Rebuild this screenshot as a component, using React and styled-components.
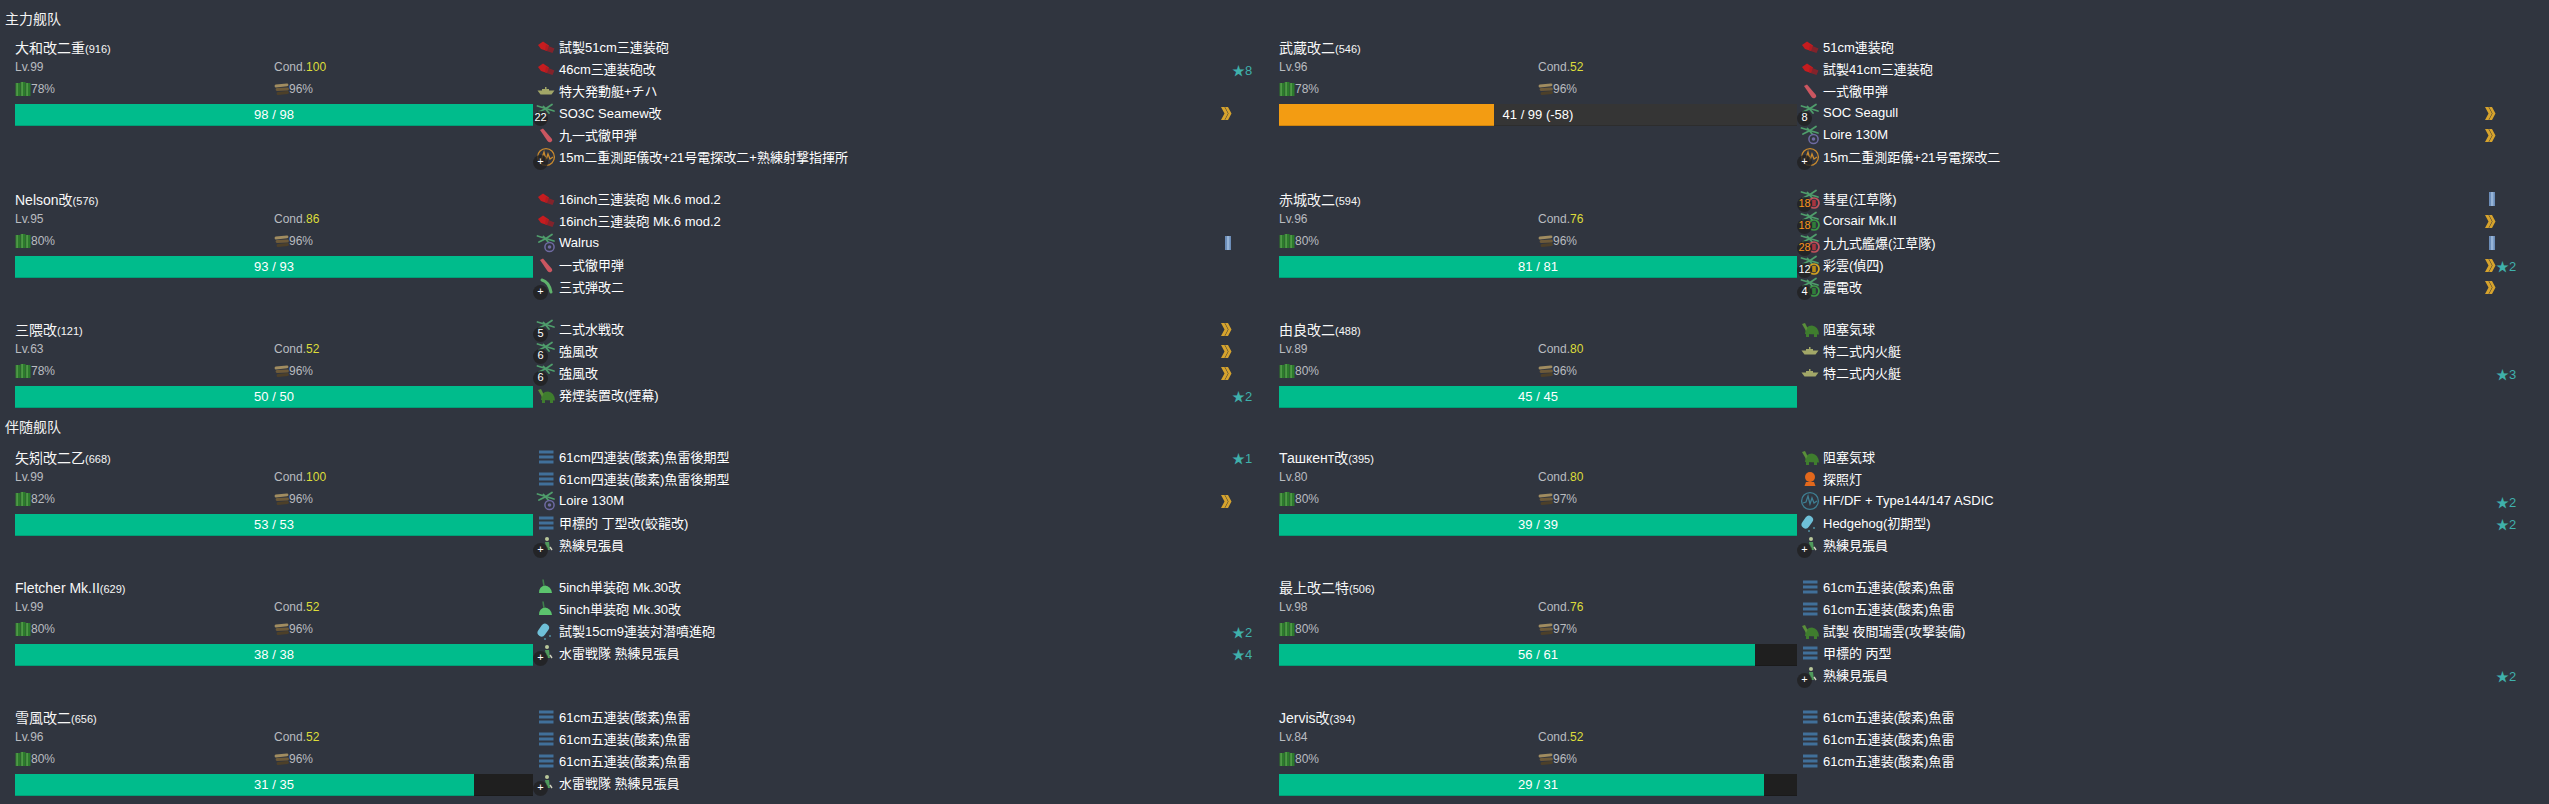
import React from 'react';
import styled, { createGlobalStyle } from 'styled-components';

const Global = createGlobalStyle`
  html, body { margin: 0; padding: 0; background: #30353f; }
  body { font-family: "Liberation Sans", "Noto Sans CJK JP", sans-serif; color: #fff; }
`;
const Page = styled.div`
  width: 2549px;
  height: 804px;
  overflow: hidden;
  background: #30353f;
  padding-top: 10px;
  box-sizing: border-box;
`;
const FleetTitle = styled.div`
  font-size: 14px;
  line-height: 18px;
  height: 18px;
  padding-left: 5px;
  margin-bottom: ${p => p.$after}px;
  color: #f4f4f4;
`;
const ShipGrid = styled.div`
  display: grid;
  grid-template-columns: 1264px 1264px;
  row-gap: 20px;
  margin-bottom: 10px;
`;
const ShipCell = styled.div`
  display: flex;
  padding: 0 13px 0 15px;
  min-width: 0;
`;
const ShipInfo = styled.div`
  width: 518px;
  flex: none;
`;
const ShipName = styled.div`
  height: 22px;
  padding-top: 3px;
  box-sizing: border-box;
  font-size: 14px;
  line-height: 18px;
  color: #f7f7f7;
`;
const ShipId = styled.span`
  font-size: 11px;
`;
const StatRow = styled.div`
  display: grid;
  grid-template-columns: 259px 259px;
  height: ${p => p.$h}px;
  align-items: center;
  font-size: 12px;
  color: #b9bcc0;
`;
const Stat = styled.div`
  display: flex;
  align-items: center;
`;
const CondValue = styled.span`
  color: #dddd3a;
`;
const HpTrack = styled.div`
  position: relative;
  height: 22px;
  margin-top: 2px;
  background: ${p => p.$track};
  box-shadow: inset 0 -1px 0 rgba(0, 0, 0, 0.15);
`;
const HpFill = styled.div`
  height: 100%;
  background: ${p => p.$color};
  box-shadow: inset 0 -1px 0 rgba(0, 0, 0, 0.15);
`;
const HpLabel = styled.div`
  position: absolute;
  inset: 0;
  text-align: center;
  font-size: 13px;
  line-height: 21px;
  color: #fff;
`;
const EquipList = styled.div`
  flex: 1;
  min-width: 0;
`;
const EquipRow = styled.div`
  display: flex;
  align-items: center;
  height: 22px;
  font-size: 13px;
  padding-left: 3px;
  color: #fff;
`;
const IconBox = styled.div`
  position: relative;
  width: 20px;
  height: 20px;
  flex: none;
  margin-right: 3px;
`;
const Count = styled.div`
  position: absolute;
  left: -3px;
  top: 8px;
  width: 15px;
  height: 15px;
  border-radius: 50%;
  background: rgba(32, 32, 34, 0.8);
  color: ${p => p.$color};
  font-size: 11px;
  line-height: 12px;
  text-align: center;
  white-space: nowrap;
  display: flex;
  justify-content: center;
`;
const EquipName = styled.div`
  flex: 1;
  white-space: nowrap;
  min-width: 0;
  padding-bottom: 1px;
`;
const ProfSlot = styled.div`
  width: 12px;
  flex: none;
  display: flex;
  justify-content: center;
  align-items: center;
`;
const StarSlot = styled.div`
  width: 19px;
  flex: none;
  text-align: right;
  font-size: 13px;
  color: #3fb0ab;
  white-space: nowrap;
`;

const green = '#4f9e6c';
const Plane = () => (
  <g fill="none" stroke={green} strokeWidth="1.8" strokeLinecap="round">
    <path d="M1.5 3 L18 8" />
    <path d="M3 9 L10 5.5 L16 1.5" />
    <path d="M7.5 3.5 L13 10" />
  </g>
);
const Roundel = ({ color, inner }) => (
  <g>
    <circle cx="14" cy="14" r="5" fill="#30353f" stroke={color} strokeWidth="1.7" />
    <rect x="12.2" y="10.8" width="3.6" height="6.4" fill={inner} />
  </g>
);
const RADAR = 'M3 12 L6 11 L8 5 L10 13 L12 7 L14 12 L17 10';
const icons = {
  gun: (
    <g>
      <path d="M2 8 L7 4.5 L13 8.5 L11 14 L5 12 Z" fill="#c61c1f" />
      <path d="M10 8 L18.5 11.5 L16.5 16 L9 13.5 Z" fill="#a51d24" opacity="0.7" />
    </g>
  ),
  ap: <path d="M4 5 L7 3.5 L16 14 Q17 16 15 17 Q13 18 11.5 16 Z" fill="#cb5660" />,
  boat: <path d="M1.5 9.5 H6 V8 H9 V6 H10.5 V8 H13 V9.5 H18.5 L15.5 13.5 H4.5 Z" fill="#a2a768" />,
  plane: <Plane />,
  seaRecon: (
    <g>
      <Plane />
      <circle cx="13.5" cy="14" r="4.6" fill="#30353f" stroke="#6f6ba3" strokeWidth="1.5" />
      <circle cx="13.5" cy="14" r="1.8" fill="#6f6ba3" />
    </g>
  ),
  radar: (
    <g fill="none" stroke="#c98a2e" strokeWidth="1.3">
      <circle cx="10" cy="10" r="8.4" />
      <path d={RADAR} />
    </g>
  ),
  radarBlue: (
    <g fill="none" stroke="#3f7f93" strokeWidth="1.3">
      <circle cx="10" cy="10" r="8.4" />
      <path d={RADAR} />
    </g>
  ),
  shell3: <path d="M6 3 Q13 5 15 15" fill="none" stroke="#5fb26c" strokeWidth="3" strokeLinecap="round" />,
  bomber: (
    <g>
      <Plane />
      <Roundel color="#c3525c" inner="#a8343e" />
    </g>
  ),
  fighter: (
    <g>
      <Plane />
      <Roundel color="#3d9a45" inner="#2f7d38" />
    </g>
  ),
  scout: (
    <g>
      <Plane />
      <Roundel color="#d8a520" inner="#b98a14" />
    </g>
  ),
  turtle: (
    <g fill="#3f7d2e">
      <path d="M5 15 Q5 6.5 12 6.5 Q18.5 7.5 19 15.5 Z" />
      <path d="M2 5 L5 4 L7.5 9 L6 12 Z" fill="#5a8f3a" />
      <rect x="6" y="15" width="3" height="3" />
      <rect x="14" y="15" width="3" height="3" />
    </g>
  ),
  torpedo: (
    <g fill="#41709a">
      <rect x="3" y="3.5" width="14.5" height="3" />
      <rect x="3" y="8.5" width="14.5" height="3" />
      <rect x="3" y="13.5" width="14.5" height="3" />
    </g>
  ),
  dome: (
    <g fill="#5cc46e">
      <path d="M3 16 Q3 9 9 8.5 Q15 9 16 16 Z" />
      <path d="M8 9 L7 2.5" stroke="#3f7f4c" strokeWidth="1.6" />
    </g>
  ),
  asw: (
    <g>
      <rect x="3.5" y="2.5" width="8" height="14" rx="4" fill="#6fc0d8" transform="rotate(35 8 9)" />
      <circle cx="14" cy="15" r="1" fill="#4f8ea0" />
      <circle cx="9" cy="18" r="1" fill="#4f8ea0" />
    </g>
  ),
  light: (
    <g fill="#e2681c">
      <circle cx="10" cy="8" r="5" />
      <path d="M6 13 H14 L15.5 17 H4.5 Z" />
    </g>
  ),
  lookout: (
    <g>
      <circle cx="11" cy="4" r="2" fill="#b9c79a" />
      <path d="M9 7 H13 L14 15 H11 L10 12 Z" fill="#4f9a5c" />
      <path d="M14 12 L16 15" stroke="#d4d4c0" strokeWidth="1.4" />
    </g>
  ),
};

const EquipIcon = ({ kind }) => (
  <svg width="20" height="20" viewBox="0 0 20 20">{icons[kind]}</svg>
);
const FuelIcon = () => (
  <svg width="16" height="14" viewBox="0 0 16 14">
    <g fill="#2c7a2c">
      <rect x="0.5" y="1" width="5" height="13" />
      <rect x="5.5" y="0" width="5" height="14" />
      <rect x="10.5" y="1" width="5" height="13" />
    </g>
    <g fill="#5fa653">
      <rect x="1.5" y="1" width="1.2" height="13" />
      <rect x="6.5" y="0" width="1.2" height="14" />
      <rect x="11.5" y="1" width="1.2" height="13" />
    </g>
  </svg>
);
const AmmoIcon = () => (
  <svg width="15" height="13" viewBox="0 0 15 13">
    <g fill="none" strokeWidth="2.8" strokeLinecap="round">
      <path d="M2 3 L13 1.8" stroke="#a08c60" />
      <path d="M3 6.5 L13.5 6" stroke="#6d5a39" />
      <path d="M4 10.5 L13.5 9.5" stroke="#4d4029" />
    </g>
  </svg>
);
const Chevrons = () => (
  <svg width="12" height="15" viewBox="0 0 12 15">
    <path d="M1 1 H4.5 L8 7.5 L4.5 14 H1 L4.5 7.5 Z" fill="#d6a32d" />
    <path d="M5 1 H8 L11.5 7.5 L8 14 H5 L8.5 7.5 Z" fill="#d6a32d" />
  </svg>
);
const Bar = () => (
  <svg width="6" height="14" viewBox="0 0 6 14" style={{ marginLeft: 4 }}>
    <rect width="6" height="14" fill="#6c8db8" />
    <rect x="2" width="2.4" height="14" fill="#97b4d6" />
  </svg>
);

const ORANGE = '#f7941d';
const e = (name, kind, o = {}) => ({ name, kind, ...o });
const plus = { n: '+' };
const T61 = '61cm五連装(酸素)魚雷';
const T61Q = '61cm四連装(酸素)魚雷後期型';
const LOOK = '熟練見張員';
const TLOOK = '水雷戦隊 熟練見張員';

const fleets = [
  {
    title: '主力舰队',
    after: 8,
    ships: [
      { name: '大和改二重', id: 916, lv: 99, cond: 100, fuel: 78, ammo: 96, hp: 98, max: 98, equip: [
        e('試製51cm三連装砲', 'gun'), e('46cm三連装砲改', 'gun', { star: 8 }), e('特大発動艇+チハ', 'boat'),
        e('SO3C Seamew改', 'plane', { n: 22, prof: 'c' }), e('九一式徹甲弾', 'ap'),
        e('15m二重測距儀改+21号電探改二+熟練射撃指揮所', 'radar', plus),
      ] },
      { name: '武蔵改二', id: 546, lv: 96, cond: 52, fuel: 78, ammo: 96, hp: 41, max: 99, label: '41 / 99 (-58)', color: '#f39c12', track: '#353535', equip: [
        e('51cm連装砲', 'gun'), e('試製41cm三連装砲', 'gun'), e('一式徹甲弾', 'ap'),
        e('SOC Seagull', 'plane', { n: 8, prof: 'c' }), e('Loire 130M', 'seaRecon', { prof: 'c' }),
        e('15m二重測距儀+21号電探改二', 'radar', plus),
      ] },
      { name: 'Nelson改', id: 576, lv: 95, cond: 86, fuel: 80, ammo: 96, hp: 93, max: 93, equip: [
        e('16inch三連装砲 Mk.6 mod.2', 'gun'), e('16inch三連装砲 Mk.6 mod.2', 'gun'),
        e('Walrus', 'seaRecon', { prof: 'b' }), e('一式徹甲弾', 'ap'), e('三式弾改二', 'shell3', plus),
      ] },
      { name: '赤城改二', id: 594, lv: 96, cond: 76, fuel: 80, ammo: 96, hp: 81, max: 81, equip: [
        e('彗星(江草隊)', 'bomber', { n: 18, nc: ORANGE, prof: 'b' }),
        e('Corsair Mk.II', 'fighter', { n: 18, nc: ORANGE, prof: 'c' }),
        e('九九式艦爆(江草隊)', 'bomber', { n: 28, nc: ORANGE, prof: 'b' }),
        e('彩雲(偵四)', 'scout', { n: 12, prof: 'c', star: 2 }),
        e('震電改', 'fighter', { n: 4, prof: 'c' }),
      ] },
      { name: '三隈改', id: 121, lv: 63, cond: 52, fuel: 78, ammo: 96, hp: 50, max: 50, equip: [
        e('二式水戦改', 'plane', { n: 5, prof: 'c' }), e('強風改', 'plane', { n: 6, prof: 'c' }),
        e('強風改', 'plane', { n: 6, prof: 'c' }), e('発煙装置改(煙幕)', 'turtle', { star: 2 }),
      ] },
      { name: '由良改二', id: 488, lv: 89, cond: 80, fuel: 80, ammo: 96, hp: 45, max: 45, equip: [
        e('阻塞気球', 'turtle'), e('特二式内火艇', 'boat'), e('特二式内火艇', 'boat', { star: 3 }),
      ] },
    ],
  },
  {
    title: '伴随舰队',
    after: 10,
    ships: [
      { name: '矢矧改二乙', id: 668, lv: 99, cond: 100, fuel: 82, ammo: 96, hp: 53, max: 53, equip: [
        e(T61Q, 'torpedo', { star: 1 }), e(T61Q, 'torpedo'), e('Loire 130M', 'seaRecon', { prof: 'c' }),
        e('甲標的 丁型改(蛟龍改)', 'torpedo'), e(LOOK, 'lookout', plus),
      ] },
      { name: 'Ташкент改', id: 395, lv: 80, cond: 80, fuel: 80, ammo: 97, hp: 39, max: 39, equip: [
        e('阻塞気球', 'turtle'), e('探照灯', 'light'), e('HF/DF + Type144/147 ASDIC', 'radarBlue', { star: 2 }),
        e('Hedgehog(初期型)', 'asw', { star: 2 }), e(LOOK, 'lookout', plus),
      ] },
      { name: 'Fletcher Mk.II', id: 629, lv: 99, cond: 52, fuel: 80, ammo: 96, hp: 38, max: 38, equip: [
        e('5inch単装砲 Mk.30改', 'dome'), e('5inch単装砲 Mk.30改', 'dome'),
        e('試製15cm9連装対潜噴進砲', 'asw', { star: 2 }), e(TLOOK, 'lookout', { n: '+', star: 4 }),
      ] },
      { name: '最上改二特', id: 506, lv: 98, cond: 76, fuel: 80, ammo: 97, hp: 56, max: 61, equip: [
        e(T61, 'torpedo'), e(T61, 'torpedo'), e('試製 夜間瑞雲(攻撃装備)', 'turtle'),
        e('甲標的 丙型', 'torpedo'), e(LOOK, 'lookout', { n: '+', star: 2 }),
      ] },
      { name: '雪風改二', id: 656, lv: 96, cond: 52, fuel: 80, ammo: 96, hp: 31, max: 35, equip: [
        e(T61, 'torpedo'), e(T61, 'torpedo'), e(T61, 'torpedo'), e(TLOOK, 'lookout', plus),
      ] },
      { name: 'Jervis改', id: 394, lv: 84, cond: 52, fuel: 80, ammo: 96, hp: 29, max: 31, equip: [
        e(T61, 'torpedo'), e(T61, 'torpedo'), e(T61, 'torpedo'),
      ] },
    ],
  },
];

const Ship = ({ s }) => (
  <ShipCell>
    <ShipInfo>
      <ShipName>{s.name}<ShipId>({s.id})</ShipId></ShipName>
      <StatRow $h={18}>
        <Stat>Lv.{s.lv}</Stat>
        <Stat>Cond.<CondValue>{s.cond}</CondValue></Stat>
      </StatRow>
      <StatRow $h={26}>
        <Stat><FuelIcon />{s.fuel}%</Stat>
        <Stat><AmmoIcon />{s.ammo}%</Stat>
      </StatRow>
      <HpTrack $track={s.track || '#1f1f1f'}>
        <HpFill $color={s.color || '#00bc8c'} style={{ width: `${(s.hp / s.max) * 100}%` }} />
        <HpLabel>{s.label || `${s.hp} / ${s.max}`}</HpLabel>
      </HpTrack>
    </ShipInfo>
    <EquipList>
      {s.equip.map((q, i) => (
        <EquipRow key={i}>
          <IconBox>
            <EquipIcon kind={q.kind} />
            {q.n !== undefined && <Count $color={q.nc || '#fff'}>{q.n}</Count>}
          </IconBox>
          <EquipName>{q.name}</EquipName>
          <ProfSlot>{q.prof === 'c' && <Chevrons />}{q.prof === 'b' && <Bar />}</ProfSlot>
          <StarSlot>{q.star ? `★${q.star}` : ''}</StarSlot>
        </EquipRow>
      ))}
    </EquipList>
  </ShipCell>
);

export default function App() {
  return (
    <Page>
      <Global />
      {fleets.map(f => (
        <React.Fragment key={f.title}>
          <FleetTitle $after={f.after}>{f.title}</FleetTitle>
          <ShipGrid>
            {f.ships.map(s => <Ship key={s.id} s={s} />)}
          </ShipGrid>
        </React.Fragment>
      ))}
    </Page>
  );
}
